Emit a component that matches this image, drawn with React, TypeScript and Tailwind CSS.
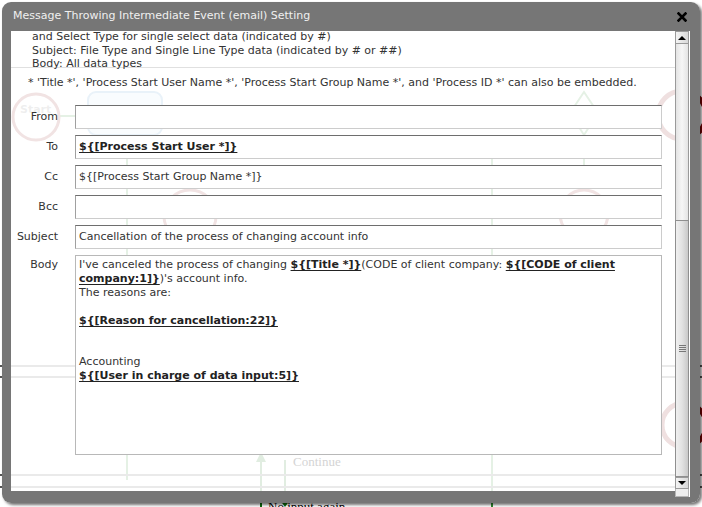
import type { ReactNode } from 'react';

type Row = {
  label: string;
  value?: ReactNode;
};

const Tag = ({ children }: { children: ReactNode }) => (
  <span className="font-bold underline decoration-[1px] underline-offset-[2px] text-[#222]">{children}</span>
);

const rows: Row[] = [
  { label: 'From' },
  { label: 'To', value: <Tag>{'${[Process Start User *]}'}</Tag> },
  { label: 'Cc', value: '${[Process Start Group Name *]}' },
  { label: 'Bcc' },
  { label: 'Subject', value: 'Cancellation of the process of changing account info' },
];

function Diagram() {
  // the process diagram that lies behind the dialog
  return (
    <svg className="absolute left-0 top-0" width="702" height="507" viewBox="0 0 702 507">
      <g fill="none" strokeWidth="2">
        <line x1="60" y1="116" x2="88" y2="116" stroke="#2e8b2e" />
        <line x1="127" y1="135" x2="127" y2="480" stroke="#2e8b2e" />
        <line x1="492" y1="135" x2="492" y2="507" stroke="#2e8b2e" />
        <line x1="584" y1="135" x2="584" y2="190" stroke="#2e8b2e" />
        <line x1="261" y1="460" x2="261" y2="507" stroke="#0a6e0a" />
        <line x1="285" y1="460" x2="285" y2="500" stroke="#0a6e0a" />
      </g>
      <polygon points="261,452 256,462 266,462" fill="#0a6e0a" />
      <polygon points="280,500 290,500 285,507" fill="#0a6e0a" />
      <line x1="0" y1="366" x2="702" y2="366" stroke="#555" strokeWidth="2" />
      <line x1="0" y1="377" x2="702" y2="377" stroke="#555" strokeWidth="2" />
      <line x1="0" y1="475" x2="702" y2="475" stroke="#555" strokeWidth="2" />
      <line x1="0" y1="487" x2="702" y2="487" stroke="#555" strokeWidth="2" />
      <circle cx="36" cy="117" r="23" fill="#fff" stroke="#8b1a1a" strokeWidth="3" />
      <text x="20" y="113" fontFamily="DejaVu Sans, sans-serif" fontSize="11" fontWeight="bold" fill="#777">Start</text>
      <rect x="88" y="92" width="74" height="43" rx="8" fill="#cfe6f7" stroke="#4a90c8" strokeWidth="2" />
      <polygon points="584,92 598,113 584,135 570,113" fill="#fff" stroke="#2e8b2e" strokeWidth="2" />
      <circle cx="190" cy="216" r="26" fill="#fff" stroke="#8b1a1a" strokeWidth="3" />
      <circle cx="584" cy="214" r="24" fill="#fff" stroke="#8b1a1a" strokeWidth="3" />
      <circle cx="682" cy="115" r="24" fill="#fff" stroke="#7a0000" strokeWidth="5" />
      <circle cx="684" cy="425" r="22" fill="#fff" stroke="#7a0000" strokeWidth="5" />
    </svg>
  );
}

function Scrollbar() {
  return (
    <div className="flex h-[466px] w-[15px] flex-col bg-white pr-[1px]">
      <div className="flex h-[13px] items-center justify-center border border-[#9a9a9a] bg-gradient-to-r from-[#f4f4f4] to-[#d8d8d8]">
        <div className="h-0 w-0 border-x-[4px] border-b-[4px] border-x-transparent border-b-black" />
      </div>
      <div className="h-[176px] border-x border-[#9a9a9a] bg-gradient-to-r from-[#e4e4e4] via-[#f6f6f6] to-[#e4e4e4]" />
      <div className="flex h-[257px] flex-col items-center justify-center gap-[1px] border border-[#8f8f8f] bg-gradient-to-r from-[#f0f0f0] via-[#e2e2e2] to-[#c9c9c9]">
        <div className="h-[1px] w-[7px] bg-[#777]" />
        <div className="h-[1px] w-[7px] bg-[#777]" />
        <div className="h-[1px] w-[7px] bg-[#777]" />
        <div className="h-[1px] w-[7px] bg-[#777]" />
      </div>
      <div className="flex h-[12px] items-center justify-center border border-[#9a9a9a] bg-gradient-to-r from-[#f4f4f4] to-[#d8d8d8]">
        <div className="h-0 w-0 border-x-[4px] border-t-[4px] border-x-transparent border-t-black" />
      </div>
      <div className="flex-1 border-x border-b border-[#b5b5b5] bg-[#eeeeee]" />
    </div>
  );
}

export default function App() {
  return (
    <div className="relative h-[507px] w-[702px] overflow-hidden bg-white font-['DejaVu_Sans',Verdana,sans-serif] text-[11px] text-[#333]">
      <Diagram />
      <span className="absolute left-[268px] top-[497px] font-['Liberation_Serif',serif] text-[13px] text-black">No input again</span>

      <div className="absolute left-[2px] top-[2px] flex h-[501px] w-[698px] flex-col overflow-hidden rounded-[9px] shadow-[2px_2px_3px_rgba(0,0,0,0.55)]">
        <div className="flex h-[29px] items-center justify-between bg-[#767676] pl-[11px] pr-[13px] text-[#f0f0f0]">
          <span>Message Throwing Intermediate Event (email) Setting</span>
          <svg width="10" height="10" viewBox="0 0 10 10">
            <path d="M1.5 1.5 L8.5 8.5 M8.5 1.5 L1.5 8.5" stroke="#000" strokeWidth="2.6" strokeLinecap="square" />
          </svg>
        </div>

        <div className="flex h-[466px]">
          <div className="w-[9px] bg-[#767676]" />
          <div className="flex w-[664px] flex-col">
            <div className="relative h-[460px] overflow-hidden bg-white/[0.88]">
              <div className="h-[37px] border-b border-[#e0e0e0] pl-[21px]">
                <div className="relative -top-[1px] leading-[13.5px]">
                  <div>and Select Type for single select data (indicated by #)</div>
                  <div>Subject: File Type and Single Line Type data (indicated by # or ##)</div>
                  <div>Body: All data types</div>
                </div>
              </div>
              <div className="pl-[17px] pt-[8px] leading-[14px]">
                * 'Title *', 'Process Start User Name *', 'Process Start Group Name *', and 'Process ID *' can also be embedded.
              </div>

              <div className="mt-[15px] flex flex-col gap-[6px]">
                {rows.map((row) => (
                  <div key={row.label} className="flex h-[24px] items-center gap-[17px]">
                    <div className="w-[47px] text-right">{row.label}</div>
                    <div className="flex h-[24px] w-[587px] items-center whitespace-nowrap border border-b-[#cccccc] border-l-[#a0a0a0] border-r-[#cccccc] border-t-[#6e6e6e] bg-white pl-[3px]">
                      {row.value}
                    </div>
                  </div>
                ))}
                <div className="flex items-start gap-[17px]">
                  <div className="w-[47px] pt-[3px] text-right leading-[14px]">Body</div>
                  <div className="h-[200px] w-[587px] border border-[#b8b8b8] bg-white pl-[3px] pr-[2px] pt-[2px] leading-[13.9px]">
                    <div>
                      I've canceled the process of changing <Tag>{'${[Title *]}'}</Tag>(CODE of client company:{' '}
                      <Tag>{'${[CODE of client company:1]}'}</Tag>)'s account info.
                    </div>
                    <div>The reasons are:</div>
                    <div>&nbsp;</div>
                    <div>
                      <Tag>{'${[Reason for cancellation:22]}'}</Tag>
                    </div>
                    <div>&nbsp;</div>
                    <div>&nbsp;</div>
                    <div>Accounting</div>
                    <div>
                      <Tag>{'${[User in charge of data input:5]}'}</Tag>
                    </div>
                  </div>
                </div>
              </div>

              <span className="absolute left-[282px] top-[421px] font-['Liberation_Serif',serif] text-[13px] text-[#d4d4d4]">Continue</span>
            </div>
            <div className="flex-1 bg-[#767676]" />
          </div>
          <Scrollbar />
          <div className="flex-1 bg-[#767676]" />
        </div>

        <div className="flex-1 bg-[#767676]" />
      </div>
    </div>
  );
}
